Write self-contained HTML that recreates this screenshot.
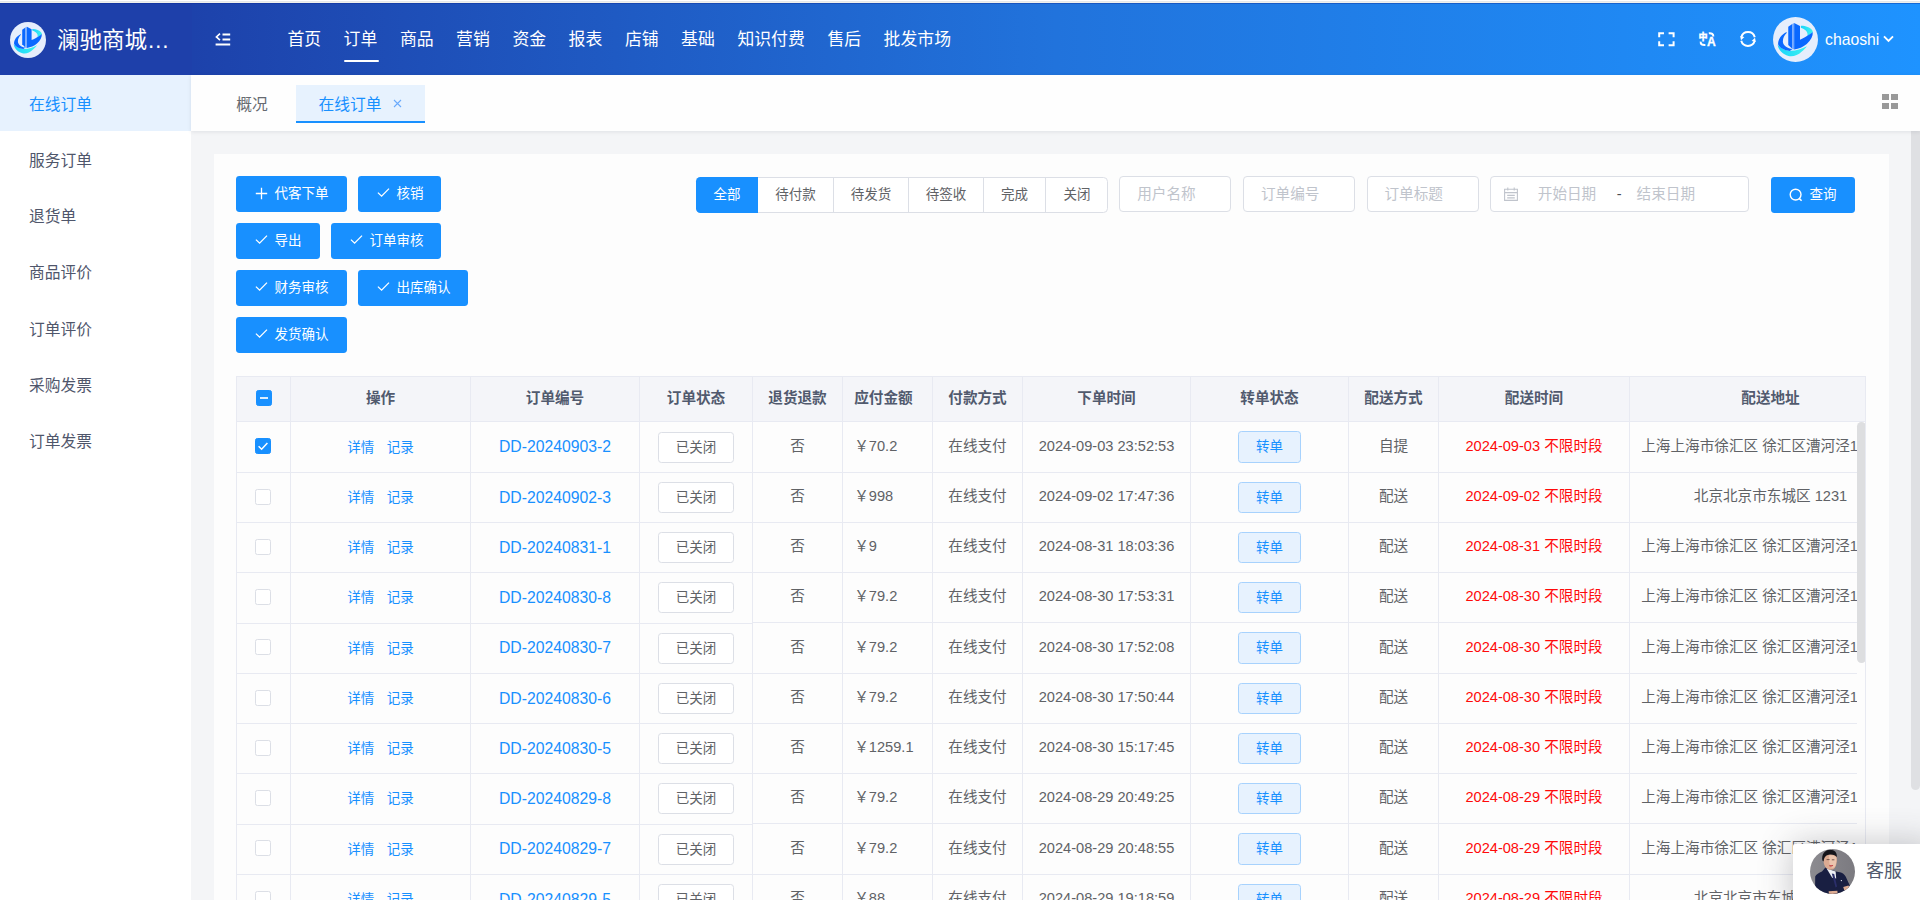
<!DOCTYPE html>
<html lang="zh-CN"><head><meta charset="utf-8"><title>在线订单</title>
<style>
*{box-sizing:border-box;margin:0;padding:0}
html,body{width:1920px;height:900px;overflow:hidden}
body{position:relative;background:#f4f5f7;font-family:"Liberation Sans","Noto Sans CJK SC",sans-serif;color:#606266;font-size:14.625px}
.abs{position:absolute}
/* top stripe */
.s0{left:0;top:0;width:1920px;height:1px;background:#fff}
.s1{left:0;top:1px;width:1920px;height:1px;background:#e6e8ea}
.s2{left:0;top:2px;width:1920px;height:1px;background:#f0f0ec}
/* header */
.hdr{left:0;top:3px;width:1920px;height:71.625px;background:#1e40aa}
.hdr .grad{left:192px;top:0;width:1728px;height:100%;background:linear-gradient(90deg,#1d42ab,#2173dc,#1e93ff)}
.hdr .edge{left:0;top:0;width:1920px;height:1px;background:rgba(8,40,150,.38)}
.logo{left:10px;top:19px;width:36px;height:36px}
.brand{left:57px;top:21.5px;height:32px;line-height:32px;font-size:22.5px;color:#fff;white-space:nowrap;letter-spacing:0}
.fold{left:215px;top:29.6px;width:16px;height:14px}
.nav{left:0;top:0;height:71.625px}
.nav span{position:absolute;top:23.5px;height:26px;line-height:26px;font-size:16.875px;color:#fff;white-space:nowrap}
.nav i{position:absolute;left:344px;top:57px;width:35px;height:2.4px;border-radius:1.2px;background:#fff}
.hic{top:25px;width:20px;height:20px}
.ava{left:1773px;top:14px;width:45px;height:45px}
.uname{left:1825px;top:24.7px;height:24px;line-height:24px;font-size:15.75px;color:#fff}
.chev{left:1883px;top:32px;width:11px;height:8px}
/* sidebar */
.side{left:0;top:74.625px;width:191.25px;height:830px;background:#fff}
.side div{position:absolute;left:0;width:191.25px;height:56.25px;line-height:59.25px;padding-left:29px;overflow:hidden;font-size:15.75px;color:#4f566b;white-space:nowrap}
.side div.on{background:#e7f2fe;color:#1890ff}
/* tabs */
.tabs{left:191.25px;top:74.625px;width:1728.75px;height:56.25px;background:#fefefe;box-shadow:0 1px 4px rgba(0,21,41,.09)}
.tabs .t{position:absolute;top:10.4px;height:38.2px;line-height:39px;overflow:hidden;font-size:15.75px;color:#666a70;white-space:nowrap}
.tabs .t1{left:45px}
.tabs .t2{left:104.75px;width:129px;background:#e7f2fe;color:#1890ff;border-bottom:2.25px solid #1890ff;padding-left:22.4px}
.tabs .x{position:absolute;left:97px;top:14px;width:9px;height:9px}
.grid{left:1882px;top:94px;width:16px;height:15px}
/* scrollbar of page */
.pscroll{left:1911px;top:130.875px;width:9px;height:659px;background:#dfe0e3;border-radius:0 0 4.5px 4.5px}
/* panel */
.panel{left:214px;top:154px;width:1674.75px;height:760px;background:#fdfdfd}
/* buttons */
.btn{position:absolute;height:36px;border-radius:3.4px;background:#1890ff;color:#fff;font-size:13.5px;line-height:36px;white-space:nowrap;text-align:left}
.btn svg{position:absolute;top:10px;width:13px;height:13px}
.btn b{position:absolute;top:0;font-weight:400}
/* radio group */
.rg{left:696px;top:177px;height:36px;width:412px;border:1px solid #dcdfe6;border-radius:4.5px;background:#fff}
.rg span{position:absolute;top:-1px;height:36px;line-height:35px;font-size:13.5px;color:#606266;text-align:center;border-right:1px solid #dcdfe6}
.rg span.on{background:#1890ff;color:#fff;border-radius:4.5px 0 0 4.5px;border:0}
/* inputs */
.inp{top:176.4px;height:35.4px;border:1px solid #dcdfe6;border-radius:4px;background:#fff;font-size:14.625px;color:#c0c4cc;line-height:35.4px;white-space:nowrap}
.inp b{position:absolute;font-weight:400;top:0}
/* table */
.thead{left:236px;top:376px;width:1630px;height:46px;background:#f4f5f9;border:1px solid #e8eaf2;border-right:1px solid #e8eaf2;overflow:hidden}
.thead .th{position:absolute;top:0;height:44px;line-height:43px;border-right:1px solid #e8eaf2;font-weight:700;color:#515a6e;font-size:14.625px;text-align:center;white-space:nowrap}
.tbwrap{left:236px;top:422px;width:1621px;height:480px;overflow:hidden;border-left:1px solid #e8eaf2;background:#fdfdfd}
.tbody{position:absolute;left:0;top:0;width:1700px}
.tr{position:relative;height:50px;line-height:47px;width:1700px}
.tr:nth-child(1),.tr:nth-child(5),.tr:nth-child(9){height:51px;line-height:48px}
.tr:nth-child(4) .fx,.tr:nth-child(8) .fx{height:calc(100% + 1px);z-index:2;background:#fdfdfd;line-height:47px}
.tr:nth-child(5) .fx,.tr:nth-child(9) .fx{top:1px;height:calc(100% - 1px);line-height:46px}
.tr:nth-child(5) .cb,.tr:nth-child(9) .cb{top:15px}
.td{position:absolute;top:0;height:100%;border-right:1px solid #e8eaf2;border-bottom:1px solid #e8eaf2;text-align:center;white-space:nowrap;color:#606266;font-size:14.625px;overflow:hidden}
.c0{left:0;width:54px}.c1{left:54px;width:180px}.c2{left:234px;width:169px}.c3{left:403px;width:113px}
.c4{left:516px;width:90px}.c5{left:606px;width:90px}.c6{left:696px;width:90px}.c7{left:786px;width:168px}
.c8{left:954px;width:158px}.c9{left:1112px;width:90px}.c10{left:1202px;width:191px}.c11{left:1393px;width:281px}
.td.c5{text-align:left;padding-left:11.25px}
.td.c11{padding:0 11.25px;overflow:visible;border-right:0}
.red{color:#ff0a0a!important}
.lk{color:#1890ff;font-size:13.5px;margin:0 6.2px;position:relative;top:1px}
.no{color:#1890ff;font-size:15.75px;position:relative;top:1px}
.mb{display:inline-block;height:31px;line-height:29px;border:1px solid #dcdfe6;border-radius:3.4px;font-size:13.5px;color:#606266;width:76px;vertical-align:middle;background:#fff;position:relative;top:0.5px}
.mb.pl{width:63px;color:#1890ff;background:#e7f2fe;border-color:#a7d2fd}
.cb{position:absolute;left:18px;top:16px;width:16px;height:16px;border:1px solid #dcdfe6;border-radius:2.4px;background:#fff}
.cb.on{background:#1890ff;border-color:#1890ff}
.cb svg{position:absolute;left:-1px;top:-1px;width:16px;height:16px}
.tscroll{left:1857px;top:422px;width:8.5px;height:241px;background:#dddee0;border-radius:4.5px}
.tright{left:1865px;top:376px;width:1px;height:530px;background:#e8eaf2}
/* customer service */
.kf{left:1793px;top:843.5px;width:140px;height:70px;background:#fff;border-radius:2px;box-shadow:0 0 34px rgba(60,60,70,.30)}
.kf svg{position:absolute;left:17px;top:5.5px;width:45px;height:45px}
.kf span{position:absolute;left:73px;top:13px;font-size:18px;line-height:28px;color:#50586c;white-space:nowrap}

.thead .th.c5{text-align:left;padding-left:11.25px}
.tr:nth-child(1) .pl,.tr:nth-child(5) .pl,.tr:nth-child(9) .pl{height:32px;line-height:30px;top:-0.5px}

</style></head>
<body>
<svg width="0" height="0" style="position:absolute">
<defs>
<linearGradient id="cy" x1="0" y1="0" x2="1" y2="0"><stop offset="0" stop-color="#19d3fb"/><stop offset="1" stop-color="#3df3ef"/></linearGradient>
<symbol id="lg" viewBox="0 0 36 36">
<circle cx="18" cy="18" r="18" fill="#e6eefc"/>
<path d="M3.7 22 C4.2 26 7 29.6 12.4 31.2 C16 32 20 30.6 22.8 27.8 C24.6 26.2 26 24.8 27.1 23.3 C23 25.6 18 27.2 13.4 27 C9.4 26.6 5.8 25 3.7 22Z" fill="url(#cy)"/>
<path d="M10.9 12 C6.6 14.2 3.8 18 4.1 22 C5.6 25 9 26.6 13.4 27.1 L15.6 25.6 C11.6 25 8.4 23 7.9 19.9 C7.8 17 9 14.4 10.9 12.7Z" fill="#0a68ff"/>
<path d="M22.3 7.1 C26 7 29.6 8.4 31.2 10.4 C31.8 11.2 31.9 11.8 31.8 12.2 C30.4 13.4 29 14.4 27.5 15.3 C28 13.4 27.4 11.6 26 10.5 C24.8 9.5 23.6 8.9 22.3 8.5Z" fill="url(#cy)"/>
<path d="M16.9 4.7 L21.6 7.2 L21.6 18.1 C24.4 17 27 15.4 28.4 14.4 C29.8 13.6 31 12.7 31.8 12 C32.1 15 30.4 18.4 27 21.6 C24 24 20.6 25.6 16.9 25.9Z" fill="#0a68ff"/>
<path d="M12.2 7.7 L15.4 5.5 L15.4 25.4 L12.2 22.3Z" fill="#0a68ff"/>
<path d="M15.4 5.5 L16.9 4.7 L16.9 25.9 L15.4 25.4Z" fill="#6ea5ff"/>
</symbol>
</defs>
</svg>
<div class="abs hdr">
  <div class="abs grad"></div>
  <div class="abs edge"></div>
  <svg class="abs logo"><use href="#lg"/></svg>
  <div class="abs brand">澜驰商城…</div>
  <svg class="abs fold" viewBox="0 0 16 14"><path d="M7.5 1.4H15.2M7.5 6.4H15.2M0.6 11.5H15.2" stroke="#fff" stroke-width="2" fill="none"/><path d="M5 0.6 L1.4 3.9 L5 7.2" stroke="#fff" stroke-width="1.6" fill="none"/></svg>
  <div class="abs nav">
    <span style="left:287.4px">首页</span><span style="left:343.6px">订单</span><span style="left:399.9px">商品</span><span style="left:456.1px">营销</span><span style="left:512.4px">资金</span><span style="left:568.6px">报表</span><span style="left:624.9px">店铺</span><span style="left:681.1px">基础</span><span style="left:737.4px">知识付费</span><span style="left:827.4px">售后</span><span style="left:883.6px">批发市场</span>
    <i></i>
  </div>
  <svg class="abs hic" style="left:1656px" viewBox="0 0 20 20"><path d="M3.2 9.2V5.2H8M12.6 5.2H17.6V9.2M17.6 13.2V17.2H12.6M8 17.2H3.2V13.2" fill="none" stroke="#fff" stroke-width="2"/></svg>
  <svg class="abs hic" style="left:1697px" viewBox="0 0 20 20"><text x="1.5" y="11.7" font-size="9.1" font-weight="900" fill="#fff" stroke="#fff" stroke-width="0.25" font-family="Noto Sans CJK SC,sans-serif">中</text><text x="9.9" y="18" font-size="12.1" font-weight="700" fill="#fff" stroke="#fff" stroke-width="0.3" font-family="Liberation Sans,sans-serif">A</text><path d="M11.8 5.3 C14.8 4.9 16.5 6.2 16.3 8.5" fill="none" stroke="#fff" stroke-width="2"/><path d="M3.7 13.7 C3.4 16.2 5 17.1 8.4 16.9" fill="none" stroke="#fff" stroke-width="2"/></svg>
  <svg class="abs hic" style="left:1737.6px" viewBox="0 0 20 20"><path d="M16.76 9.19 A7 7 0 0 0 3.3 9.2" fill="none" stroke="#fff" stroke-width="2"/><path d="M3.24 12.81 A7 7 0 0 0 16.7 12.8" fill="none" stroke="#fff" stroke-width="2"/><path d="M3.0 12.3 L2.2 8.3 L6.4 9.1Z M17 9.7 L17.8 13.7 L13.6 12.9Z" fill="#fff"/></svg>
  <svg class="abs ava"><use href="#lg"/></svg>
  <div class="abs uname">chaoshi</div>
  <svg class="abs chev" viewBox="0 0 11 8"><path d="M1 1.4 L5.5 5.9 L10 1.4" fill="none" stroke="#fff" stroke-width="1.9"/></svg>
</div>
<div class="abs s0"></div><div class="abs s1"></div><div class="abs s2"></div>

<div class="abs side">
  <div class="on" style="top:0">在线订单</div>
  <div style="top:56.25px">服务订单</div>
  <div style="top:112.5px">退货单</div>
  <div style="top:168.75px">商品评价</div>
  <div style="top:225px">订单评价</div>
  <div style="top:281.25px">采购发票</div>
  <div style="top:337.5px">订单发票</div>
</div>

<div class="abs panel"></div>
<div class="abs pscroll"></div>

<div class="abs tabs">
  <div class="t t1">概况</div>
  <div class="t t2">在线订单<svg class="x" viewBox="0 0 9 9"><path d="M1 1 L8 8 M8 1 L1 8" stroke="#6aaafc" stroke-width="1.1" fill="none"/></svg></div>
</div>
<svg class="abs grid" viewBox="0 0 16 15"><path d="M0 0h7v6h-7zM9 0h7v6h-7zM0 9h7v6h-7zM9 9h7v6h-7z" fill="#999"/></svg>

<!-- toolbar buttons -->
<div class="btn" style="left:236px;top:176px;width:111px"><svg style="left:19px;top:11px" viewBox="0 0 13 13"><path d="M6.5 0.8V12.2M0.8 6.5H12.2" stroke="#fff" stroke-width="1.3" fill="none"/></svg><b style="left:38.4px">代客下单</b></div>
<div class="btn" style="left:358px;top:176px;width:83px"><svg style="left:18.5px" viewBox="0 0 13 13"><path d="M0.9 6.6 L4.6 10.2 L12 2.6" stroke="#fff" stroke-width="1.3" fill="none"/></svg><b style="left:38.4px">核销</b></div>
<div class="btn" style="left:236px;top:223px;width:84px"><svg style="left:18.5px" viewBox="0 0 13 13"><path d="M0.9 6.6 L4.6 10.2 L12 2.6" stroke="#fff" stroke-width="1.3" fill="none"/></svg><b style="left:38.4px">导出</b></div>
<div class="btn" style="left:331px;top:223px;width:110px"><svg style="left:18.5px" viewBox="0 0 13 13"><path d="M0.9 6.6 L4.6 10.2 L12 2.6" stroke="#fff" stroke-width="1.3" fill="none"/></svg><b style="left:38.4px">订单审核</b></div>
<div class="btn" style="left:236px;top:270px;width:111px"><svg style="left:18.5px" viewBox="0 0 13 13"><path d="M0.9 6.6 L4.6 10.2 L12 2.6" stroke="#fff" stroke-width="1.3" fill="none"/></svg><b style="left:38.4px">财务审核</b></div>
<div class="btn" style="left:358px;top:270px;width:110px"><svg style="left:18.5px" viewBox="0 0 13 13"><path d="M0.9 6.6 L4.6 10.2 L12 2.6" stroke="#fff" stroke-width="1.3" fill="none"/></svg><b style="left:38.4px">出库确认</b></div>
<div class="btn" style="left:236px;top:317px;width:111px"><svg style="left:18.5px" viewBox="0 0 13 13"><path d="M0.9 6.6 L4.6 10.2 L12 2.6" stroke="#fff" stroke-width="1.3" fill="none"/></svg><b style="left:38.4px">发货确认</b></div>

<!-- filter -->
<div class="abs rg">
  <span class="on" style="left:-1px;width:62px">全部</span><span style="left:61px;width:76px">待付款</span><span style="left:137px;width:75px">待发货</span><span style="left:212px;width:75px">待签收</span><span style="left:287px;width:62px">完成</span><span style="left:349px;width:62px;border-right:0">关闭</span>
</div>
<div class="abs inp" style="left:1119.2px;width:111.6px"><b style="left:17px">用户名称</b></div>
<div class="abs inp" style="left:1243px;width:111.6px"><b style="left:17px">订单编号</b></div>
<div class="abs inp" style="left:1366.5px;width:112px"><b style="left:17px">订单标题</b></div>
<div class="abs inp" style="left:1490.3px;width:258.6px">
  <svg style="position:absolute;left:11.5px;top:8.6px;width:16px;height:16px" viewBox="0 0 16 16"><path d="M1.6 3.2h12.8v11.2h-12.8zM1.6 6.6h12.8M4.8 1.4v3M11.2 1.4v3M4.2 9.4h7.6M4.2 11.9h7.6" fill="none" stroke="#c0c4cc" stroke-width="1.1"/></svg>
  <b style="left:46.5px">开始日期</b><b style="left:125.5px;color:#4a4d55">-</b><b style="left:145.3px">结束日期</b>
</div>
<div class="btn" style="left:1771px;top:177px;width:84px"><svg style="left:18.4px;top:11px;width:14px;height:14px" viewBox="0 0 14 14"><circle cx="6.6" cy="6.6" r="5.4" stroke="#fff" stroke-width="1.4" fill="none"/><path d="M10.4 10.6 L12.6 12.8" stroke="#fff" stroke-width="1.5"/></svg><b style="left:38.6px">查询</b></div>

<!-- table -->
<div class="abs thead">
  <div class="th c0"><span class="cb on" style="left:19px;top:13px"><svg viewBox="0 0 16 16"><path d="M4 8H12" stroke="#fff" stroke-width="1.7"/></svg></span></div>
  <div class="th c1">操作</div><div class="th c2">订单编号</div><div class="th c3">订单状态</div><div class="th c4">退货退款</div><div class="th c5">应付金额</div><div class="th c6">付款方式</div><div class="th c7">下单时间</div><div class="th c8">转单状态</div><div class="th c9">配送方式</div><div class="th c10">配送时间</div><div class="th c11" style="border-right:0">配送地址</div>
</div>
<div class="abs tbwrap">

<div class="tbody">
<div class="tr"><div class="td fx c0"><span class="cb on"><svg viewBox="0 0 16 16"><path d="M3.6 8.3 L6.6 11.2 L12.4 4.9" fill="none" stroke="#fff" stroke-width="1.5"/></svg></span></div><div class="td fx c1"><span class="lk">详情</span><span class="lk">记录</span></div><div class="td fx c2"><span class="no">DD-20240903-2</span></div><div class="td fx c3"><span class="mb">已关闭</span></div><div class="td c4">否</div><div class="td c5">￥70.2</div><div class="td c6">在线支付</div><div class="td c7">2024-09-03 23:52:53</div><div class="td c8"><span class="mb pl">转单</span></div><div class="td c9">自提</div><div class="td c10 red">2024-09-03 不限时段</div><div class="td c11"><span class="ad">上海上海市徐汇区 徐汇区漕河泾1888号创新大厦</span></div></div>
<div class="tr"><div class="td fx c0"><span class="cb"></span></div><div class="td fx c1"><span class="lk">详情</span><span class="lk">记录</span></div><div class="td fx c2"><span class="no">DD-20240902-3</span></div><div class="td fx c3"><span class="mb">已关闭</span></div><div class="td c4">否</div><div class="td c5">￥998</div><div class="td c6">在线支付</div><div class="td c7">2024-09-02 17:47:36</div><div class="td c8"><span class="mb pl">转单</span></div><div class="td c9">配送</div><div class="td c10 red">2024-09-02 不限时段</div><div class="td c11"><span class="ad">北京北京市东城区 1231</span></div></div>
<div class="tr"><div class="td fx c0"><span class="cb"></span></div><div class="td fx c1"><span class="lk">详情</span><span class="lk">记录</span></div><div class="td fx c2"><span class="no">DD-20240831-1</span></div><div class="td fx c3"><span class="mb">已关闭</span></div><div class="td c4">否</div><div class="td c5">￥9</div><div class="td c6">在线支付</div><div class="td c7">2024-08-31 18:03:36</div><div class="td c8"><span class="mb pl">转单</span></div><div class="td c9">配送</div><div class="td c10 red">2024-08-31 不限时段</div><div class="td c11"><span class="ad">上海上海市徐汇区 徐汇区漕河泾1888号创新大厦</span></div></div>
<div class="tr"><div class="td fx c0"><span class="cb"></span></div><div class="td fx c1"><span class="lk">详情</span><span class="lk">记录</span></div><div class="td fx c2"><span class="no">DD-20240830-8</span></div><div class="td fx c3"><span class="mb">已关闭</span></div><div class="td c4">否</div><div class="td c5">￥79.2</div><div class="td c6">在线支付</div><div class="td c7">2024-08-30 17:53:31</div><div class="td c8"><span class="mb pl">转单</span></div><div class="td c9">配送</div><div class="td c10 red">2024-08-30 不限时段</div><div class="td c11"><span class="ad">上海上海市徐汇区 徐汇区漕河泾1888号创新大厦</span></div></div>
<div class="tr"><div class="td fx c0"><span class="cb"></span></div><div class="td fx c1"><span class="lk">详情</span><span class="lk">记录</span></div><div class="td fx c2"><span class="no">DD-20240830-7</span></div><div class="td fx c3"><span class="mb">已关闭</span></div><div class="td c4">否</div><div class="td c5">￥79.2</div><div class="td c6">在线支付</div><div class="td c7">2024-08-30 17:52:08</div><div class="td c8"><span class="mb pl">转单</span></div><div class="td c9">配送</div><div class="td c10 red">2024-08-30 不限时段</div><div class="td c11"><span class="ad">上海上海市徐汇区 徐汇区漕河泾1888号创新大厦</span></div></div>
<div class="tr"><div class="td fx c0"><span class="cb"></span></div><div class="td fx c1"><span class="lk">详情</span><span class="lk">记录</span></div><div class="td fx c2"><span class="no">DD-20240830-6</span></div><div class="td fx c3"><span class="mb">已关闭</span></div><div class="td c4">否</div><div class="td c5">￥79.2</div><div class="td c6">在线支付</div><div class="td c7">2024-08-30 17:50:44</div><div class="td c8"><span class="mb pl">转单</span></div><div class="td c9">配送</div><div class="td c10 red">2024-08-30 不限时段</div><div class="td c11"><span class="ad">上海上海市徐汇区 徐汇区漕河泾1888号创新大厦</span></div></div>
<div class="tr"><div class="td fx c0"><span class="cb"></span></div><div class="td fx c1"><span class="lk">详情</span><span class="lk">记录</span></div><div class="td fx c2"><span class="no">DD-20240830-5</span></div><div class="td fx c3"><span class="mb">已关闭</span></div><div class="td c4">否</div><div class="td c5">￥1259.1</div><div class="td c6">在线支付</div><div class="td c7">2024-08-30 15:17:45</div><div class="td c8"><span class="mb pl">转单</span></div><div class="td c9">配送</div><div class="td c10 red">2024-08-30 不限时段</div><div class="td c11"><span class="ad">上海上海市徐汇区 徐汇区漕河泾1888号创新大厦</span></div></div>
<div class="tr"><div class="td fx c0"><span class="cb"></span></div><div class="td fx c1"><span class="lk">详情</span><span class="lk">记录</span></div><div class="td fx c2"><span class="no">DD-20240829-8</span></div><div class="td fx c3"><span class="mb">已关闭</span></div><div class="td c4">否</div><div class="td c5">￥79.2</div><div class="td c6">在线支付</div><div class="td c7">2024-08-29 20:49:25</div><div class="td c8"><span class="mb pl">转单</span></div><div class="td c9">配送</div><div class="td c10 red">2024-08-29 不限时段</div><div class="td c11"><span class="ad">上海上海市徐汇区 徐汇区漕河泾1888号创新大厦</span></div></div>
<div class="tr"><div class="td fx c0"><span class="cb"></span></div><div class="td fx c1"><span class="lk">详情</span><span class="lk">记录</span></div><div class="td fx c2"><span class="no">DD-20240829-7</span></div><div class="td fx c3"><span class="mb">已关闭</span></div><div class="td c4">否</div><div class="td c5">￥79.2</div><div class="td c6">在线支付</div><div class="td c7">2024-08-29 20:48:55</div><div class="td c8"><span class="mb pl">转单</span></div><div class="td c9">配送</div><div class="td c10 red">2024-08-29 不限时段</div><div class="td c11"><span class="ad">上海上海市徐汇区 徐汇区漕河泾1888号创新大厦</span></div></div>
<div class="tr"><div class="td fx c0"><span class="cb"></span></div><div class="td fx c1"><span class="lk">详情</span><span class="lk">记录</span></div><div class="td fx c2"><span class="no">DD-20240829-5</span></div><div class="td fx c3"><span class="mb">已关闭</span></div><div class="td c4">否</div><div class="td c5">￥88</div><div class="td c6">在线支付</div><div class="td c7">2024-08-29 19:18:59</div><div class="td c8"><span class="mb pl">转单</span></div><div class="td c9">配送</div><div class="td c10 red">2024-08-29 不限时段</div><div class="td c11"><span class="ad">北京北京市东城区 1231</span></div></div>
</div>
</div>
<div class="abs tscroll"></div>
<div class="abs tright"></div>
<div class="abs kf">
  <svg viewBox="0 0 45 45"><defs><clipPath id="kc"><circle cx="22.5" cy="22.5" r="22.5"/></clipPath><linearGradient id="kbg" x1="0" y1="0" x2="1" y2="0"><stop offset="0" stop-color="#8c8b90"/><stop offset="1" stop-color="#7b7a80"/></linearGradient></defs>
  <g clip-path="url(#kc)"><rect width="45" height="45" fill="url(#kbg)"/>
  <path d="M5 46 L5.2 27.5 C6 25.5 9 24 12 22.6 L15.4 18.6 L26 22.4 L31 23.6 C34 24.6 35.6 27 36.8 30 L40 37 L38 42 L30 46Z" fill="#191f42"/>
  <path d="M16.6 19.6 L25.6 22.6 L26.2 29.6 L22.2 28.8Z" fill="#eef0f5"/>
  <path d="M21.8 24.4 L24.2 25 L27 37.4 L25.6 38.4 Z" fill="#2b2f6b"/>
  <path d="M13.4 8 C13 14 14.6 18.4 18 20.2 C20.4 21.4 23.4 20.8 25 18.6 C26.6 16 27.2 11.6 26.6 7.4 C24 4.4 16 4.4 13.4 8Z" fill="#dcab92"/>
  <path d="M19 6.6 C22 5.8 25 6.6 26.4 9 C26.6 12 26 15 25 17.6 C23.4 19.4 21.4 19.2 20.2 17 C19 14 18.8 10 19 6.6Z" fill="#ebc5ae"/>
  <path d="M12.4 11.6 C11.4 5.4 14.6 1 19.6 0.7 C24.6 0.5 27.4 3.6 26.8 8.2 C25.4 6 22.4 5.2 18.6 5.8 C15.4 6.4 13.8 8.6 13.6 12.6Z" fill="#15151b"/>
  <path d="M19.4 16.4 C20.6 17 22 17 23 16.4" stroke="#c23a40" stroke-width="1.1" fill="none"/>
  <path d="M16.6 10.6 h3 M21.8 10.8 h2.6" stroke="#5a4038" stroke-width="0.8"/>
  <path d="M18.6 42.2 L27.4 41.8 L27.6 44.8 L19 45Z M33.2 38 L38.6 36.4 L39.6 40 L34.4 41.6Z" fill="#dcab92"/>
  <circle cx="31.4" cy="31.6" r="0.7" fill="#e9edf3"/>
  </g></svg>
  <span>客服</span>
</div>

</body></html>
